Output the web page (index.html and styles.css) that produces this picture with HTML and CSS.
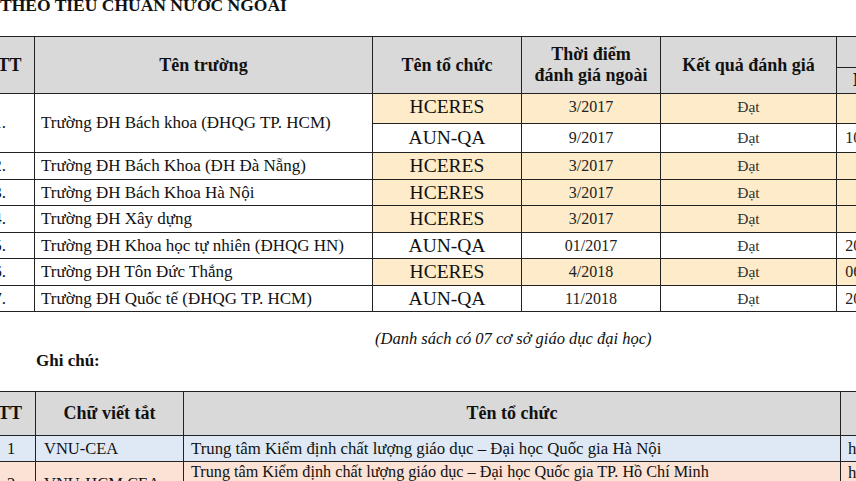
FILE: index.html
```html
<!DOCTYPE html>
<html lang="vi">
<head>
<meta charset="utf-8">
<title>Danh sách đánh giá theo tiêu chuẩn nước ngoài</title>
<link rel="stylesheet" href="styles.css">
</head>
<body>
<div class="page">
  <h2 class="title">THEO TIÊU CHUẨN NƯỚC NGOÀI</h2>

  <table class="t1">
    <colgroup>
      <col class="c-stt"><col class="c-name"><col class="c-org"><col class="c-date"><col class="c-res"><col class="c-year"><col class="c-more">
    </colgroup>
    <thead>
      <tr class="h-top">
        <th rowspan="2">STT</th>
        <th rowspan="2">Tên trường</th>
        <th rowspan="2">Tên tổ chức</th>
        <th rowspan="2" class="two">Thời điểm<br>đánh giá ngoài</th>
        <th rowspan="2">Kết quả đánh giá</th>
        <th colspan="2">Giấy chứng nhận</th>
      </tr>
      <tr class="h-sub">
        <th>Năm</th>
        <th>Hiệu lực</th>
      </tr>
    </thead>
    <tbody>
      <tr class="ra hc">
        <td rowspan="2" class="stt">1.</td>
        <td rowspan="2" class="name">Trường ĐH Bách khoa (ĐHQG TP. HCM)</td>
        <td class="org">HCERES</td><td class="date">3/2017</td><td class="res">Đạt</td><td class="yr">2022</td><td class="yr">2022</td>
      </tr>
      <tr class="rb">
        <td class="org">AUN-QA</td><td class="date">9/2017</td><td class="res">Đạt</td><td class="yr">10/2022</td><td class="yr">2022</td>
      </tr>
      <tr class="r odd hc">
        <td class="stt">2.</td><td class="name">Trường ĐH Bách Khoa (ĐH Đà Nẵng)</td>
        <td class="org">HCERES</td><td class="date">3/2017</td><td class="res">Đạt</td><td class="yr">2022</td><td class="yr">2022</td>
      </tr>
      <tr class="r even hc">
        <td class="stt">3.</td><td class="name">Trường ĐH Bách Khoa Hà Nội</td>
        <td class="org">HCERES</td><td class="date">3/2017</td><td class="res">Đạt</td><td class="yr">2022</td><td class="yr">2022</td>
      </tr>
      <tr class="r odd hc">
        <td class="stt">4.</td><td class="name">Trường ĐH Xây dựng</td>
        <td class="org">HCERES</td><td class="date">3/2017</td><td class="res">Đạt</td><td class="yr">2022</td><td class="yr">2022</td>
      </tr>
      <tr class="r even">
        <td class="stt">5.</td><td class="name">Trường ĐH Khoa học tự nhiên (ĐHQG HN)</td>
        <td class="org">AUN-QA</td><td class="date">01/2017</td><td class="res">Đạt</td><td class="yr">20/2022</td><td class="yr">2022</td>
      </tr>
      <tr class="r odd hc">
        <td class="stt">6.</td><td class="name">Trường ĐH Tôn Đức Thắng</td>
        <td class="org">HCERES</td><td class="date">4/2018</td><td class="res">Đạt</td><td class="yr">06/2023</td><td class="yr">2023</td>
      </tr>
      <tr class="r even">
        <td class="stt">7.</td><td class="name">Trường ĐH Quốc tế (ĐHQG TP. HCM)</td>
        <td class="org">AUN-QA</td><td class="date">11/2018</td><td class="res">Đạt</td><td class="yr">20/2023</td><td class="yr">2023</td>
      </tr>
    </tbody>
  </table>

  <p class="caption">(Danh sách có 07 cơ sở giáo dục đại học)</p>
  <p class="note">Ghi chú:</p>

  <table class="t2">
    <colgroup>
      <col class="d-stt"><col class="d-abbr"><col class="d-org"><col class="d-url">
    </colgroup>
    <thead>
      <tr><th>STT</th><th>Chữ viết tắt</th><th>Tên tổ chức</th><th>Website</th></tr>
    </thead>
    <tbody>
      <tr class="blue">
        <td class="num">1</td><td class="abbr">VNU-CEA</td>
        <td class="oname">Trung tâm Kiểm định chất lượng giáo dục – Đại học Quốc gia Hà Nội</td>
        <td class="url">http://www.ceaa.vnu.edu.vn</td>
      </tr>
      <tr class="salmon">
        <td class="num">2</td><td class="abbr">VNU-HCM CEA</td>
        <td class="oname top">Trung tâm Kiểm định chất lượng giáo dục – Đại học Quốc gia TP. Hồ Chí Minh</td>
        <td class="url top">http://www.cea.vnuhcm.edu.vn</td>
      </tr>
    </tbody>
  </table>
</div>
</body>
</html>
```

FILE: styles.css
```css
html, body {
  margin: 0;
  padding: 0;
  background: #ffffff;
}

body {
  font-family: "Liberation Serif", "Times New Roman", serif;
  color: #111;
}

.page {
  width: 856px;
  height: 481px;
  overflow: hidden;
}

.title {
  margin: -5px 0 0 0;
  font-size: 17.5px;
  line-height: 20px;
  font-weight: bold;
  white-space: nowrap;
}

table {
  border-collapse: collapse;
  table-layout: fixed;
}

th, td {
  border: 1px solid #222;
  padding: 0;
  overflow: hidden;
  white-space: nowrap;
}

th {
  background: #d9d9d9;
  font-size: 18px;
  font-weight: bold;
  text-align: center;
  line-height: 21px;
}

/* ---------- table 1 ---------- */
.t1 {
  margin: 21px 0 0 -26px;
  width: 1082px;
}

.c-stt { width: 60px; }
.c-name { width: 338px; }
.c-org { width: 149px; }
.c-date { width: 139px; }
.c-res { width: 176px; }
.c-year { width: 70px; }
.c-more { width: 150px; }

.t1 .h-top { height: 31px; }
.t1 .h-sub { height: 26px; }

.t1 td {
  background: #fff;
  text-align: center;
  vertical-align: middle;
}

.t1 .hc .org,
.t1 .hc .date,
.t1 .hc .res,
.t1 .hc .yr {
  background: #fdebc9;
}

.t1 .ra { height: 30px; }
.t1 .rb { height: 29px; }
.t1 .odd { height: 27px; }
.t1 .even { height: 26px; }

.t1 .stt {
  font-size: 17px;
  padding-right: 10px;
}

.t1 .name {
  text-align: left;
  padding-left: 6px;
  font-size: 17px;
}

.t1 .org {
  font-size: 19.5px;
  line-height: 22px;
}

.t1 .ra td.org,
.t1 .ra td.date,
.t1 .ra td.res {
  padding-bottom: 3px;
}

.t1 .date {
  font-size: 16px;
  color: #222;
}

.t1 .res {
  font-size: 15.5px;
  color: #333;
}

.t1 .yr {
  font-size: 16px;
  color: #222;
}

/* ---------- notes ---------- */
.caption {
  margin: 17px 0 0 375px;
  font-size: 16.5px;
  line-height: 20px;
  font-style: italic;
  white-space: nowrap;
}

.note {
  margin: 2px 0 0 36px;
  font-size: 17px;
  line-height: 20px;
  font-weight: bold;
}

/* ---------- table 2 ---------- */
.t2 {
  margin: 20px 0 0 -26px;
  width: 1026px;
}

.d-stt { width: 61px; }
.d-abbr { width: 148px; }
.d-org { width: 657px; }
.d-url { width: 160px; }

.t2 thead tr { height: 44px; }
.t2 .blue { height: 26px; }
.t2 .salmon { height: 44px; }

.t2 .blue td { background: #dfe9f5; }
.t2 .salmon td { background: #fbe2d5; }

.t2 td {
  font-size: 16.5px;
  line-height: 19px;
  vertical-align: middle;
}

.t2 .num {
  text-align: center;
  padding-left: 12px;
}

.t2 .abbr {
  padding-left: 8px;
}

.t2 .oname,
.t2 .url {
  padding-left: 7px;
  font-size: 16.8px;
}

.t2 .salmon .oname {
  font-size: 16.2px;
}

.t2 .top {
  vertical-align: top;
  padding-top: 1px;
}
```
